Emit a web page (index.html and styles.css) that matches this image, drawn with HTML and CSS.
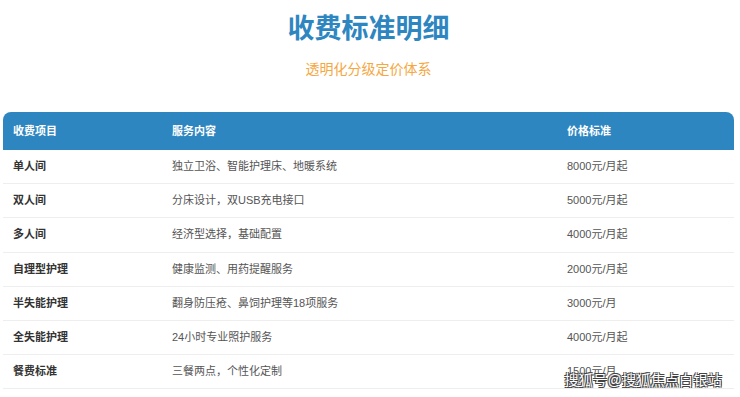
FILE: index.html
```html
<!DOCTYPE html>
<html lang="zh-CN">
<head>
<meta charset="UTF-8">
<title>收费标准明细</title>
<link rel="stylesheet" href="styles.css">
</head>
<body>
<div class="hero">
  <h1 class="title">收费标准明细</h1>
  <p class="subtitle">透明化分级定价体系</p>
</div>
<table class="fees">
  <thead>
    <tr>
      <th class="col-item">收费项目</th>
      <th class="col-desc">服务内容</th>
      <th class="col-price">价格标准</th>
    </tr>
  </thead>
  <tbody>
    <tr><td class="item">单人间</td><td>独立卫浴、智能护理床、地暖系统</td><td>8000元/月起</td></tr>
    <tr><td class="item">双人间</td><td>分床设计，双USB充电接口</td><td>5000元/月起</td></tr>
    <tr><td class="item">多人间</td><td>经济型选择，基础配置</td><td>4000元/月起</td></tr>
    <tr><td class="item">自理型护理</td><td>健康监测、用药提醒服务</td><td>2000元/月起</td></tr>
    <tr><td class="item">半失能护理</td><td>翻身防压疮、鼻饲护理等18项服务</td><td>3000元/月</td></tr>
    <tr><td class="item">全失能护理</td><td>24小时专业照护服务</td><td>4000元/月起</td></tr>
    <tr><td class="item">餐费标准</td><td>三餐两点，个性化定制</td><td>1500元/月</td></tr>
  </tbody>
</table>
<div class="watermark">搜狐号@搜狐焦点白银站</div>
</body>
</html>
```

FILE: styles.css
```css
* {
  font-family: "Liberation Sans", "Noto Sans CJK SC", sans-serif;
}
body {
  margin: 0;
  padding: 0 6px 0 3px;
  background-color: #fff;
  position: relative;
  height: 397px;
  overflow: hidden;
}
.hero {
  text-align: center;
  padding-top: 12px;
  margin-bottom: 33px;
}
.title {
  margin: 0;
  font-size: 27px;
  line-height: 35px;
  font-weight: bold;
  color: #2e86c1;
}
.subtitle {
  margin: 12px 0 0 0;
  font-size: 14px;
  line-height: 20px;
  color: #f5a742;
}

.fees {
  width: 100%;
  border-collapse: separate;
  border-spacing: 0;
}
.fees th {
  background-color: #2e86c1;
  color: #fff;
  font-size: 11px;
  font-weight: bold;
  text-align: left;
  line-height: 17px;
  padding: 11px 10px 10px 10px;
}
.fees th:first-child {
  border-top-left-radius: 8px;
}
.fees th:last-child {
  border-top-right-radius: 8px;
}
.col-item {
  width: 139px;
}
.col-desc {
  width: 375px;
}
.fees td {
  font-size: 11px;
  line-height: 17.2px;
  padding: 8px 10px;
  color: #555;
  border-bottom: 1px solid #eee;
}
.fees td.item {
  font-weight: bold;
  color: #333;
}

.watermark {
  position: absolute;
  right: 18px;
  bottom: 8px;
  font-size: 14px;
  line-height: 18px;
  letter-spacing: 0.3px;
  color: #fff;
  text-shadow: 1px 1px 0 #444, -1px -1px 0 #444, 1px -1px 0 #444, -1px 1px 0 #444;
}
```
